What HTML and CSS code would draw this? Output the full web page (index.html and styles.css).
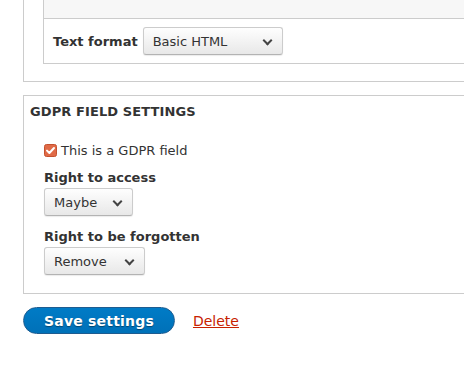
FILE: index.html
```html
<!DOCTYPE html>
<html lang="en">
  <head>
    <meta charset="UTF-8" />
    <title>Field settings</title>
    <link rel="stylesheet" href="styles.css">
  </head>
  <body>
    <div class="page">
      <div class="fieldsetOuter">
        <div class="filterBox">
          <div class="filterTop"></div>
          <div class="filterRow">
            <label class="inlineLabel" for="format">Text format</label>
            <div class="selectWrap wideSelect">
              <select id="format">
                <option>Basic HTML</option>
              </select>
            </div>
          </div>
        </div>
      </div>

      <div class="gdprFieldset">
        <div class="legend">GDPR field settings</div>
        <div class="gdprBody">
          <label class="checkRow">
            <svg class="checkIcon" width="13" height="13" viewBox="0 0 13 13">
              <rect x="0.5" y="0.5" width="12" height="12" rx="2" fill="#e06a47" stroke="#c4512f" />
              <path d="M3 6.6 L5.4 9 L10 4" fill="none" stroke="#fff" stroke-width="2" stroke-linecap="round" stroke-linejoin="round" />
            </svg>
            This is a GDPR field
          </label>
          <div class="formItem">
            <label class="blockLabel" for="access">Right to access</label>
            <div class="selectWrap accessSelect">
              <select id="access">
                <option>Maybe</option>
              </select>
            </div>
          </div>
          <div class="formItem">
            <label class="blockLabel" for="forgotten">Right to be forgotten</label>
            <div class="selectWrap forgetSelect">
              <select id="forgotten">
                <option>Remove</option>
              </select>
            </div>
          </div>
        </div>
      </div>

      <div class="actions">
        <button type="submit" class="saveButton">Save settings</button>
        <a href="#" class="deleteLink">Delete</a>
      </div>
    </div>
  </body>
</html>
```

FILE: styles.css
```css
body {
  margin: 0;
  overflow: hidden;
  background: #fff;
  font-family: "DejaVu Sans", Verdana, sans-serif;
  font-size: 13px;
  color: #333;
}
.page {
  width: 520px;
  padding-left: 23px;
}
.fieldsetOuter {
  border: 1px solid #ccc;
  border-top: none;
  padding: 0 0 17px 19px;
}
.filterBox {
  border: 1px solid #ccc;
  border-top: none;
}
.filterTop {
  height: 18px;
  background: #f7f7f7;
  border-bottom: 1px solid #ccc;
}
.filterRow {
  display: flex;
  align-items: center;
  padding: 8px 0 8px 9px;
}
.inlineLabel {
  font-weight: bold;
  margin-right: 5px;
}
.selectWrap {
  position: relative;
  height: 28px;
  box-sizing: border-box;
  border: 1px solid #ccc;
  border-bottom-color: #b3b3b3;
  border-radius: 3px;
  background: linear-gradient(#fefefe, #e8e8e8);
  box-shadow: 0 1px 1px rgba(0, 0, 0, 0.08);
}
.selectWrap::after {
  content: "";
  position: absolute;
  right: 11px;
  top: 9px;
  width: 5px;
  height: 5px;
  border-right: 2px solid #444;
  border-bottom: 2px solid #444;
  transform: rotate(45deg);
}
.selectWrap select {
  appearance: none;
  -webkit-appearance: none;
  border: none;
  background: transparent;
  width: 100%;
  height: 100%;
  padding: 0 0 0 9px;
  font-family: inherit;
  font-size: 13px;
  color: #333;
}
.wideSelect {
  width: 140px;
}
.accessSelect {
  width: 89px;
}
.forgetSelect {
  width: 101px;
}
.gdprFieldset {
  margin-top: 13px;
  border: 1px solid #ccc;
  padding: 0 0 18px 0;
}
.legend {
  padding: 7px 6px 0 6px;
  font-weight: bold;
  text-transform: uppercase;
  letter-spacing: 0.1px;
  line-height: 17px;
}
.gdprBody {
  padding: 22px 0 0 20px;
}
.checkRow {
  display: flex;
  align-items: center;
  gap: 4px;
  line-height: 17px;
}
.checkIcon {
  flex: none;
}
.formItem {
  margin-top: 10px;
}
.blockLabel {
  display: block;
  font-weight: bold;
  line-height: 17px;
  margin-bottom: 2px;
}
.formItem + .formItem {
  margin-top: 12px;
}
.actions {
  display: flex;
  align-items: center;
  margin-top: 13px;
}
.saveButton {
  height: 27px;
  padding: 0 20px;
  border: 1px solid #1e5c90;
  border-radius: 20px;
  background: linear-gradient(#007bc6, #0071b8);
  color: #fff;
  font-family: inherit;
  font-size: 14px;
  font-weight: bold;
  letter-spacing: 0.2px;
  text-shadow: 0 1px 1px rgba(0, 0, 0, 0.4);
  cursor: pointer;
}
.deleteLink {
  margin-left: 18px;
  font-size: 14px;
  color: #c72100;
}
```
